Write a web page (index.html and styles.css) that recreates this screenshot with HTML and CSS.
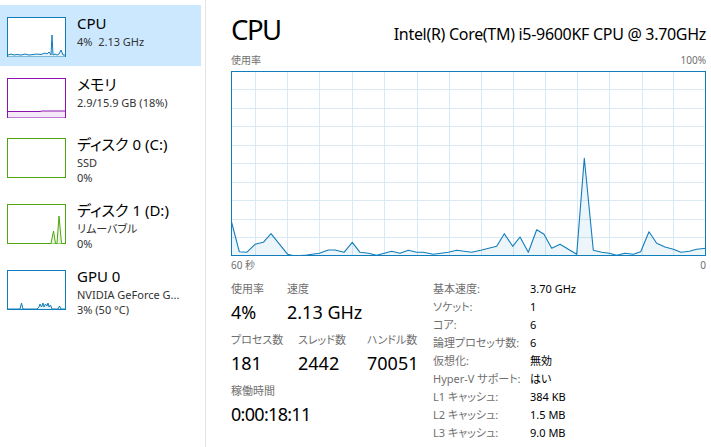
FILE: index.html
```html
<!DOCTYPE html>
<html lang="ja">
<head>
<meta charset="utf-8">
<title>タスク マネージャー - CPU</title>
<link rel="stylesheet" href="styles.css">
</head>
<body>
<div class="app">
  <nav class="sidebar">
    <div class="item selected">
      <svg class="thumb" viewBox="0 0 59 40">
        <rect x="0.5" y="0.5" width="58" height="39" fill="#fff" stroke="#117dbb"/>
        <polygon points="1,38 4,37 7,38 10,37.5 14,38 18,37 22,38 26,37.5 30,37 34,37.5 38,36 40,37 42,35 44,38 45,18 46,38 48,37 50,38 52,37 54,33 56,38 58,38 58,39.5 1,39.5" fill="#e6f1f8"/>
        <polyline points="1,38 4,37 7,38 10,37.5 14,38 18,37 22,38 26,37.5 30,37 34,37.5 38,36 40,37 42,35 44,38 45,18 46,38 48,37 50,38 52,37 54,33 56,38 58,38" fill="none" stroke="#117dbb" stroke-width="1"/>
      </svg>
      <div class="info">
        <div class="title">CPU</div>
        <div class="sub">4%&nbsp;&nbsp;2.13 GHz</div>
      </div>
    </div>
    <div class="item">
      <svg class="thumb" viewBox="0 0 59 40">
        <rect x="0.5" y="0.5" width="58" height="39" fill="#fff" stroke="#8b12ae"/>
        <polygon points="1,33.5 33,33.5 35,33 58,33 58,39.5 1,39.5" fill="#f4e8f8"/>
        <polyline points="1,33.5 33,33.5 35,33 58,33" fill="none" stroke="#8b12ae" stroke-width="1"/>
      </svg>
      <div class="info">
        <div class="title">メモリ</div>
        <div class="sub">2.9/15.9 GB (18%)</div>
      </div>
    </div>
    <div class="item tall">
      <svg class="thumb" viewBox="0 0 59 40">
        <rect x="0.5" y="0.5" width="58" height="39" fill="#fff" stroke="#4da60c"/>
      </svg>
      <div class="info">
        <div class="title">ディスク 0 (C:)</div>
        <div class="sub">SSD</div>
        <div class="sub">0%</div>
      </div>
    </div>
    <div class="item tall">
      <svg class="thumb" viewBox="0 0 59 40">
        <rect x="0.5" y="0.5" width="58" height="39" fill="#fff" stroke="#4da60c"/>
        <polygon points="44,39.5 46.5,27 48.5,39.5 50,39.5 52,12 54.5,39.5" fill="#eef6e7"/>
        <polyline points="44,39.5 46.5,27 48.5,39.5 50,39.5 52,12 54.5,39.5" fill="none" stroke="#4da60c" stroke-width="1"/>
      </svg>
      <div class="info">
        <div class="title">ディスク 1 (D:)</div>
        <div class="sub">リムーバブル</div>
        <div class="sub">0%</div>
      </div>
    </div>
    <div class="item tall">
      <svg class="thumb" viewBox="0 0 59 40">
        <rect x="0.5" y="0.5" width="58" height="39" fill="#fff" stroke="#117dbb"/>
        <polyline points="1,39 13,39 14.5,33 16,39 30,39 32,37 33,34 34.5,37 36,33 37,37 38.5,34 40,36 41,33 42,37 43.5,35 45,39 51,39 52.5,36 54,39 58,39" fill="#e6f1f8" stroke="#117dbb" stroke-width="1"/>
      </svg>
      <div class="info">
        <div class="title">GPU 0</div>
        <div class="sub">NVIDIA GeForce G...</div>
        <div class="sub">3% (50 °C)</div>
      </div>
    </div>
  </nav>

  <main class="main">
    <header class="head">
      <h1 class="heading">CPU</h1>
      <div class="model">Intel(R) Core(TM) i5-9600KF CPU @ 3.70GHz</div>
    </header>
    <div class="axis"><span>使用率</span><span>100%</span></div>
    <svg class="graph" viewBox="0 0 475 185">
      <rect x="0" y="0" width="475" height="185" fill="#fff"/>
      <g stroke="#d9eaf4" stroke-width="1">
        <line x1="0" y1="18.5" x2="475" y2="18.5"/>
        <line x1="0" y1="37.5" x2="475" y2="37.5"/>
        <line x1="0" y1="55.5" x2="475" y2="55.5"/>
        <line x1="0" y1="74.5" x2="475" y2="74.5"/>
        <line x1="0" y1="92.5" x2="475" y2="92.5"/>
        <line x1="0" y1="111.5" x2="475" y2="111.5"/>
        <line x1="0" y1="129.5" x2="475" y2="129.5"/>
        <line x1="0" y1="148.5" x2="475" y2="148.5"/>
        <line x1="0" y1="166.5" x2="475" y2="166.5"/>
        <line x1="24.5" y1="0" x2="24.5" y2="185"/>
        <line x1="56.5" y1="0" x2="56.5" y2="185"/>
        <line x1="88.5" y1="0" x2="88.5" y2="185"/>
        <line x1="121.5" y1="0" x2="121.5" y2="185"/>
        <line x1="153.5" y1="0" x2="153.5" y2="185"/>
        <line x1="186.5" y1="0" x2="186.5" y2="185"/>
        <line x1="218.5" y1="0" x2="218.5" y2="185"/>
        <line x1="250.5" y1="0" x2="250.5" y2="185"/>
        <line x1="282.5" y1="0" x2="282.5" y2="185"/>
        <line x1="314.5" y1="0" x2="314.5" y2="185"/>
        <line x1="346.5" y1="0" x2="346.5" y2="185"/>
        <line x1="378.5" y1="0" x2="378.5" y2="185"/>
        <line x1="411.5" y1="0" x2="411.5" y2="185"/>
        <line x1="442.5" y1="0" x2="442.5" y2="185"/>
      </g>
      <polygon fill="#117dbb" fill-opacity="0.08" points="0,149 8.3,180.7 15.7,181.3 24,173.3 32.3,171.3 40,162.7 56.7,183.3 64,185 75.7,184 88.3,182.3 97.3,179 104,179 113,181.3 121.3,171.3 129,181.3 137.3,182.3 145.7,184.3 160.7,180.3 169,182.3 177.3,179.3 185.7,181.3 192.3,181.3 202.3,183.3 217.3,181.3 225.7,179.3 240.7,181.3 249.7,179.3 265.7,175.3 273.3,162.7 281.7,175.3 289,166 297.3,181.3 305.7,158.7 313,163.3 320.7,177.3 329,173.3 337.3,178.3 345.7,183.3 353.3,87.3 362.3,179.3 370.7,181.3 378.3,182.3 385.7,184.3 394,182.3 402.3,183.3 409.7,180.7 418,160.7 425.7,172.3 434,176 442.3,178.3 450,181.3 458.3,180.3 465.7,178.3 475,177.3 475,185 0,185"/>
      <polyline fill="none" stroke="#117dbb" stroke-width="1.1" stroke-linejoin="round" points="0,149 8.3,180.7 15.7,181.3 24,173.3 32.3,171.3 40,162.7 56.7,183.3 64,185 75.7,184 88.3,182.3 97.3,179 104,179 113,181.3 121.3,171.3 129,181.3 137.3,182.3 145.7,184.3 160.7,180.3 169,182.3 177.3,179.3 185.7,181.3 192.3,181.3 202.3,183.3 217.3,181.3 225.7,179.3 240.7,181.3 249.7,179.3 265.7,175.3 273.3,162.7 281.7,175.3 289,166 297.3,181.3 305.7,158.7 313,163.3 320.7,177.3 329,173.3 337.3,178.3 345.7,183.3 353.3,87.3 362.3,179.3 370.7,181.3 378.3,182.3 385.7,184.3 394,182.3 402.3,183.3 409.7,180.7 418,160.7 425.7,172.3 434,176 442.3,178.3 450,181.3 458.3,180.3 465.7,178.3 475,177.3"/>
      <rect x="0.5" y="0.5" width="474" height="184" fill="none" stroke="#117dbb" stroke-width="1"/>
    </svg>
    <div class="axis axis-bottom"><span>60 秒</span><span>0</span></div>

    <section class="stats">
      <div class="dyn">
        <div class="group g1">
          <div class="stat s-a"><div class="lbl">使用率</div><div class="val">4%</div></div>
          <div class="stat"><div class="lbl">速度</div><div class="val">2.13 GHz</div></div>
        </div>
        <div class="group g2">
          <div class="stat s-b"><div class="lbl">プロセス数</div><div class="val">181</div></div>
          <div class="stat s-c"><div class="lbl">スレッド数</div><div class="val">2442</div></div>
          <div class="stat"><div class="lbl">ハンドル数</div><div class="val">70051</div></div>
        </div>
        <div class="group">
          <div class="stat"><div class="lbl">稼働時間</div><div class="val uptime">0:00:18:11</div></div>
        </div>
      </div>
      <dl class="details">
        <dt>基本速度:</dt><dd>3.70 GHz</dd>
        <dt>ソケット:</dt><dd>1</dd>
        <dt>コア:</dt><dd>6</dd>
        <dt>論理プロセッサ数:</dt><dd>6</dd>
        <dt>仮想化:</dt><dd>無効</dd>
        <dt>Hyper-V サポート:</dt><dd>はい</dd>
        <dt>L1 キャッシュ:</dt><dd>384 KB</dd>
        <dt>L2 キャッシュ:</dt><dd>1.5 MB</dd>
        <dt>L3 キャッシュ:</dt><dd>9.0 MB</dd>
      </dl>
    </section>
  </main>
</div>
</body>
</html>
```

FILE: styles.css
```css
html, body {
  margin: 0;
  padding: 0;
  background: #fff;
}
body {
  font-family: "Noto Sans", "Noto Sans CJK JP", sans-serif;
  font-feature-settings: "palt";
  color: #000;
}
.app {
  display: flex;
  width: 711px;
  height: 447px;
  overflow: hidden;
}
.sidebar {
  width: 206px;
  flex-shrink: 0;
  box-sizing: border-box;
  padding: 5px 4px 0 0;
  border-right: 1px solid #e3e3e3;
}
.item {
  display: flex;
  align-items: flex-start;
  box-sizing: border-box;
  height: 60px;
  padding: 12px 0 0 7px;
}
.item.tall {
  height: 66px;
}
.item.selected {
  background: #cce8ff;
  height: 61px;
}
.thumb {
  display: block;
  width: 59px;
  height: 40px;
  flex-shrink: 0;
}
.info {
  margin: -4px 0 0 11px;
  white-space: nowrap;
}
.title {
  font-size: 15px;
  line-height: 20px;
  margin-bottom: 1px;
}
.sub {
  font-size: 11px;
  line-height: 15px;
  color: #333;
}
.main {
  flex: 1;
  min-width: 0;
  padding: 13px 5px 0 25px;
}
.head {
  display: flex;
  justify-content: space-between;
  align-items: baseline;
  height: 34px;
}
.heading {
  margin: 0;
  font-weight: normal;
  font-size: 27.5px;
  letter-spacing: -1.5px;
  line-height: 34px;
}
.model {
  font-size: 16px;
  letter-spacing: -0.3px;
  white-space: nowrap;
}
.axis {
  display: flex;
  justify-content: space-between;
  font-size: 10px;
  line-height: 14px;
  color: #707070;
  margin-top: 6px;
}
.graph {
  display: block;
  width: 475px;
  height: 185px;
  margin-top: 4px;
}
.axis-bottom {
  margin-top: 2px;
}
.stats {
  display: flex;
  margin-top: 9px;
}
.dyn {
  width: 202px;
  flex-shrink: 0;
}
.group {
  display: flex;
  margin-bottom: 8px;
}
.s-a { width: 56px; }
.s-b { width: 67px; }
.s-c { width: 69px; }
.lbl {
  font-size: 11px;
  line-height: 16px;
  color: #707070;
  white-space: nowrap;
}
.val {
  font-size: 18px;
  line-height: 24px;
  margin-top: 3px;
  white-space: nowrap;
}
.uptime {
  letter-spacing: -0.7px;
}
.details {
  display: grid;
  grid-template-columns: 97px auto;
  align-content: start;
  margin: -1px 0 0 0;
  font-size: 11px;
  line-height: 18px;
}
.details dt {
  color: #707070;
  white-space: nowrap;
}
.details dd {
  margin: 0;
  color: #000;
  white-space: nowrap;
}
```
